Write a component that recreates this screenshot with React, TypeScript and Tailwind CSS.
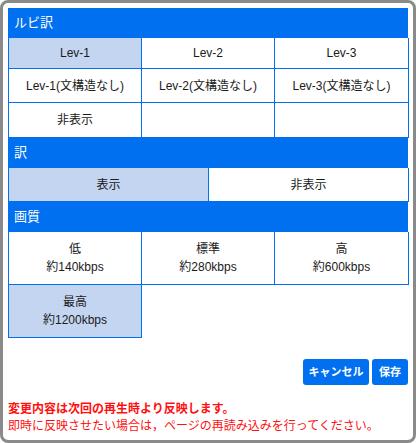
const blue = 'bg-[#0070f0]';

const Header = ({ label }: { label: string }) => (
  <div className={`${blue} h-[30px] flex items-center px-[6px] text-white text-[13px]`}>{label}</div>
);

type Cell = { text?: string; sub?: string; active?: boolean };

const Grid = ({ rows, cols, heights }: { rows: Cell[][]; cols: string; heights: string[] }) => (
  <div className={`grid ${cols} border-l border-[#0070f0]`}>
    {rows.map((row, r) =>
      row.map((c, i) => (
        <div
          key={`${r}-${i}`}
          className={`${heights[r]} border-r border-b border-[#0070f0] flex flex-col items-center justify-center text-[12px] leading-[18px] text-[#1a1a1a] ${
            c.active ? 'bg-[#c4d5f1]' : 'bg-white'
          }`}
        >
          {c.text && <span>{c.text}</span>}
          {c.sub && <span>{c.sub}</span>}
        </div>
      ))
    )}
  </div>
);

export default function App() {
  return (
    <div
      className="w-[416px] h-[443px] border-[3px] border-[#8a8a8a] rounded-[8px] bg-white p-[5px] flex flex-col"
      style={{ fontFamily: '"Liberation Sans", "Noto Sans CJK JP", sans-serif' }}
    >
      <Header label="ルビ訳" />
      <Grid
        cols="grid-cols-[133px_133px_134px]"
        heights={['h-[31px]', 'h-[34px]', 'h-[35px]']}
        rows={[
          [{ text: 'Lev-1', active: true }, { text: 'Lev-2' }, { text: 'Lev-3' }],
          [{ text: 'Lev-1(文構造なし)' }, { text: 'Lev-2(文構造なし)' }, { text: 'Lev-3(文構造なし)' }],
          [{ text: '非表示' }, {}, {}],
        ]}
      />
      <Header label="訳" />
      <Grid
        cols="grid-cols-[200px_200px]"
        heights={['h-[34px]']}
        rows={[[{ text: '表示', active: true }, { text: '非表示' }]]}
      />
      <Header label="画質" />
      <Grid
        cols="grid-cols-[133px_133px_134px]"
        heights={['h-[53px]', 'h-[53px]']}
        rows={[
          [
            { text: '低', sub: '約140kbps' },
            { text: '標準', sub: '約280kbps' },
            { text: '高', sub: '約600kbps' },
          ],
          [{ text: '最高', sub: '約1200kbps', active: true }],
        ]}
      />

      <div className="flex justify-end gap-[3px] mt-[21px]">
        <button className={`${blue} w-[66px] h-[26px] rounded-[3px] text-white text-[11px] font-bold`}>キャンセル</button>
        <button className={`${blue} w-[36px] h-[26px] rounded-[3px] text-white text-[11px] font-bold`}>保存</button>
      </div>

      <div className="mt-[16px] text-[12px] leading-[17px] text-[#ff1010]">
        <p className="font-bold">変更内容は次回の再生時より反映します。</p>
        <p>即時に反映させたい場合は，ページの再読み込みを行ってください。</p>
      </div>
    </div>
  );
}
